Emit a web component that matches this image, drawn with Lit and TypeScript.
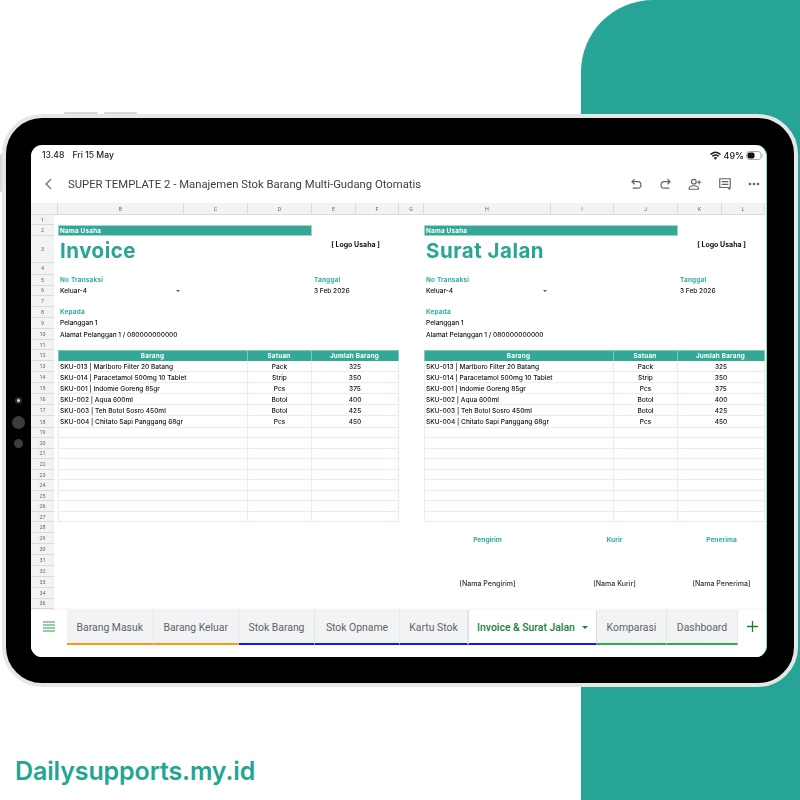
import { LitElement, html, css, svg } from 'lit';
import { customElement } from 'lit/decorators.js';

const COLS = ['', 'B', 'C', 'D', 'E', 'F', 'G', 'H', 'I', 'J', 'K', 'L'];
const ROWS = [...Array.from({ length: 34 }, (_, i) => i + 1), 36];
const ITEMS = [
  ['SKU-013 | Marlboro Filter 20 Batang', 'Pack', '325'],
  ['SKU-014 | Paracetamol 500mg 10 Tablet', 'Strip', '350'],
  ['SKU-001 | Indomie Goreng 85gr', 'Pcs', '375'],
  ['SKU-002 | Aqua 600ml', 'Botol', '400'],
  ['SKU-003 | Teh Botol Sosro 450ml', 'Botol', '425'],
  ['SKU-004 | Chitato Sapi Panggang 68gr', 'Pcs', '450'],
];
const TABS = [
  { name: 'Barang Masuk', width: 86.5, color: '#ff9a0e' },
  { name: 'Barang Keluar', width: 85.5, color: '#ff9a0e' },
  { name: 'Stok Barang', width: 76, color: '#1616ee' },
  { name: 'Stok Opname', width: 85, color: '#1616ee' },
  { name: 'Kartu Stok', width: 68, color: '#1616ee' },
  { name: 'Invoice & Surat Jalan', width: 129, color: '#1616ee', active: true },
  { name: 'Komparasi', width: 70, color: '#34a853' },
  { name: 'Dashboard', width: 71, color: '#34a853' },
];
// grid column of the first cell of each document (row header = 1, spacer = 2)
const DOCS = [
  { title: 'Invoice', start: 3 },
  { title: 'Surat Jalan', start: 9 },
];
const SIGNS = [
  { from: 9, span: 1, who: 'Pengirim' },
  { from: 10, span: 2, who: 'Kurir' },
  { from: 12, span: 2, who: 'Penerima' },
];

const at = (col: number, span: number, row: number) =>
  `grid-column:${col} / span ${span};grid-row:${row}`;

@customElement('app-root')
export class AppRoot extends LitElement {
  static styles = css`
    :host {
      display: block;
      width: 800px;
      height: 800px;
      overflow: hidden;
      font-family: 'Inter', 'Liberation Sans', sans-serif;
    }
    .page {
      position: relative;
      box-sizing: border-box;
      width: 800px;
      height: 800px;
      padding: 114px 0 0 2px;
      background: #fff;
    }
    .accent {
      position: absolute;
      top: 0;
      right: 0;
      width: 219px;
      height: 800px;
      background: #26a596;
      border-top-left-radius: 72px;
    }
    .tablet {
      position: relative;
      box-sizing: border-box;
      width: 796px;
      height: 573px;
      padding: 27px 27px 26px 25px;
      background: #000;
      border: 4px solid #e6e6e6;
      border-radius: 40px;
    }
    .key {
      position: absolute;
      background: #d9d9d9;
      border-radius: 2px;
    }
    .key.a { top: -6px; left: 58px; width: 34px; height: 2px; }
    .key.b { top: -6px; left: 98px; width: 33px; height: 2px; }
    .key.c { top: 36px; left: -6px; width: 2px; height: 38px; }
    .dot {
      position: absolute;
      border-radius: 50%;
      background: #3c3c3c;
    }
    .dot.one { left: 9px; top: 279px; width: 7px; height: 7px; background: #2e2e2e; }
    .dot.one::after {
      content: '';
      position: absolute;
      left: 2px;
      top: 2px;
      width: 3px;
      height: 3px;
      border-radius: 50%;
      background: #ddd;
    }
    .dot.two { left: 6px; top: 298px; width: 13px; height: 13px; }
    .dot.three { left: 8px; top: 321px; width: 9px; height: 9px; }
    .screen {
      position: relative;
      display: flex;
      flex-direction: column;
      height: 100%;
      overflow: hidden;
      background: #fff;
      border-radius: 11px;
      border-right: 1px solid #8ad6c8;
      color: #3c4043;
      filter: blur(0.3px);
    }
    .status {
      display: flex;
      align-items: center;
      justify-content: space-between;
      height: 20px;
      padding: 0 3px 0 11px;
      font-size: 8.6px;
      font-weight: 500;
      color: #222;
    }
    .status-right { display: flex; align-items: center; gap: 2px; font-size: 9px; }
    .status-time { margin-right: 8px; }
    .toolbar {
      display: flex;
      align-items: center;
      height: 38px;
      font-family: 'Roboto', sans-serif;
      font-size: 11.3px;
      color: #3c4043;
    }
    .back { width: 14px; height: 14px; margin: 0 12px 0 11px; flex: none; }
    .title { flex: 1; }
    .tool { width: 14px; height: 14px; flex: none; margin-right: 15.5px; }
    .tool:last-child { margin-right: 5px; }
    .sheet {
      flex: 1;
      display: grid;
      grid-template-columns: 23px 4px 126px 64px 64px 44px 43px 25px 127px 63px 64px 44px 43px;
      grid-template-rows:
        12px 10px 11px 27px
        11.5px 11px 10.5px 10.5px 11px 11.5px 11px 10px
        11px repeat(6, 11.1px) repeat(9, 10.55px) repeat(8, 10.87px);
      align-content: start;
      overflow: hidden;
      font-size: 6.55px;
      font-weight: 500;
      color: #111;
    }
    .col, .num {
      display: flex;
      align-items: center;
      justify-content: center;
      box-sizing: border-box;
      background: #f3f3f3;
      font-family: 'Roboto', sans-serif;
      font-size: 5.4px;
      font-weight: 400;
      color: #666;
    }
    .col { border-right: 1px solid #dcdcdc; border-bottom: 1px solid #dcdcdc; }
    .num { border-bottom: 1px solid #dadada; grid-column: 1; }
    .corner { grid-column: 1 / span 2; grid-row: 1; }
    .cell {
      display: flex;
      align-items: center;
      min-width: 0;
      padding: 0 2px;
      white-space: nowrap;
      box-sizing: border-box;
    }
    .band {
      background: #35a796;
      color: #fff;
      font-weight: 700;
      letter-spacing: 0.25px;
      font-size: 6.3px;
      border: 1px solid #9ed8cc;
      padding-left: 1px;
    }
    .doc-title {
      align-items: flex-start;
      color: #2ba593;
      font-size: 20.5px;
      font-weight: 700;
      letter-spacing: 0.5px;
      line-height: 29px;
    }
    .logo {
      justify-content: center;
      align-items: flex-start;
      padding-top: 4px;
      font-weight: 700;
      color: #111;
      font-size: 7px;
    }
    .label { color: #2fae9b; font-weight: 700; font-size: 6.4px; letter-spacing: 0.2px; }
    .pick { justify-content: space-between; padding-right: 4px; }
    .caret {
      width: 0;
      height: 0;
      border-left: 2px solid transparent;
      border-right: 2px solid transparent;
      border-top: 2px solid #555;
    }
    .center { justify-content: center; }
    .th { border: 1px solid #7cc9ba; border-left-width: 0; border-bottom: 0; }
    .th.first { border-left-width: 1px; }
    .td { padding-top: 1px; border-right: 1px solid #e3f2e3; border-bottom: 1px solid #e3f2e3; }
    .td.first { padding-left: 1px; border-left: 1px solid #e3f2e3; }
    .sign { padding-top: 3px; justify-content: center; color: #2fae9b; font-weight: 700; font-size: 6.6px; }
    .signee { padding-top: 2px; justify-content: center; font-size: 7px; color: #333; }
    .tabs {
      display: flex;
      height: 47px;
      flex: none;
      font-family: 'Roboto', sans-serif;
      font-size: 10.4px;
      color: #5f6368;
      background: #fff;
      box-shadow: 0 -1px 2px rgba(0, 0, 0, 0.06);
    }
    .menu {
      display: flex;
      justify-content: center;
      width: 36px;
      flex: none;
      padding-top: 11px;
      box-sizing: border-box;
    }
    .tab {
      display: flex;
      align-items: center;
      justify-content: center;
      gap: 7px;
      box-sizing: border-box;
      flex: none;
      height: 35px;
      padding-top: 1px;
      background: #f1f3f4;
      border-right: 1px solid #e6e8ea;
      border-bottom: 2px solid;
    }
    .tab.active {
      background: #fff;
      color: #188038;
      font-weight: 500;
      border-left: 1px solid #dadce0;
      border-right: 1px solid #dadce0;
    }
    .tab-caret {
      width: 0;
      height: 0;
      border-left: 3px solid transparent;
      border-right: 3px solid transparent;
      border-top: 3px solid #188038;
    }
    .add { display: flex; justify-content: center; flex: 1; padding-top: 11px; }
    .brand {
      margin: 67px 0 0 13px;
      color: #22a592;
      font-size: 25px;
      font-weight: 600;
      letter-spacing: -0.12px;
      line-height: 34px;
      position: relative;
    }
  `;

  private icon(body: unknown, cls: string) {
    return html`<svg class=${cls} viewBox="0 0 24 24" fill="none" stroke="#5f6368" stroke-width="2" stroke-linecap="round" stroke-linejoin="round">${body}</svg>`;
  }

  private renderStatus() {
    return html`<div class="status">
      <div><span class="status-time">13.48</span>Fri 15 May</div>
      <div class="status-right">
        <svg width="11" height="9" viewBox="0 0 24 20" fill="none" stroke="#222" stroke-width="3.2" stroke-linecap="round">
          <path d="M2 7c6-5 14-5 20 0M6 11c4-3 8-3 12 0" />
          <path d="M9 15c2-1.400 4-1.400 6 0l-3 3.500z" fill="#222" stroke-width="1.500" />
        </svg>
        <span>49%</span>
        <svg width="17" height="9" viewBox="0 0 17 9">
          <rect x="0.5" y="0.500" width="14.500" height="8" rx="3" fill="#fff" stroke="#aaa" />
          <rect x="1.500" y="1.500" width="7" height="6" rx="2" fill="#111" />
          <path d="M16 3v3" stroke="#aaa" />
        </svg>
      </div>
    </div>`;
  }

  private renderToolbar() {
    return html`<div class="toolbar">
      ${this.icon(svg`<path d="M15 4l-8 8 8 8" />`, 'back')}
      <div class="title">SUPER TEMPLATE 2 - Manajemen Stok Barang Multi-Gudang Otomatis</div>
      ${this.icon(svg`<path d="M9 4L5 8l4 4M5 8h10a5.500 5.500 0 0 1 0 11H7" />`, 'tool')}
      ${this.icon(svg`<path d="M15 4l4 4-4 4M19 8H9a5.500 5.500 0 0 0 0 11h8" />`, 'tool')}
      ${this.icon(svg`<circle cx="10" cy="8" r="4" /><path d="M2 21v-1c0-3 3-5 8-5s8 2 8 5v1zM19 6v6M16 9h6" />`, 'tool')}
      ${this.icon(svg`<path d="M3 3h18v15h-1v3l-3-3H3zM7 8h10M7 12.500h10" />`, 'tool')}
      ${this.icon(svg`<circle cx="5" cy="12" r="1.300" fill="#5f6368" /><circle cx="12" cy="12" r="1.300" fill="#5f6368" /><circle cx="19" cy="12" r="1.300" fill="#5f6368" />`, 'tool')}
    </div>`;
  }

  // one document block; rows are offset by one for the column header line
  private renderDoc(doc: { title: string; start: number }) {
    const s = doc.start;
    return html`
      <div class="cell band" style=${at(s, 3, 3)}>Nama Usaha</div>
      <div class="cell doc-title" style=${at(s, 3, 4)}>${doc.title}</div>
      <div class="cell logo" style=${at(s + 3, 2, 4)}>[ Logo Usaha ]</div>
      <div class="cell label" style=${at(s, 3, 6)}>No Transaksi</div>
      <div class="cell label" style=${at(s + 3, 2, 6)}>Tanggal</div>
      <div class="cell pick" style=${at(s, 1, 7)}>Keluar-4<span class="caret"></span></div>
      <div class="cell" style=${at(s + 3, 2, 7)}>3 Feb 2026</div>
      <div class="cell label" style=${at(s, 3, 9)}>Kepada</div>
      <div class="cell" style=${at(s, 3, 10)}>Pelanggan 1</div>
      <div class="cell" style=${at(s, 3, 11)}>Alamat Pelanggan 1 / 080000000000</div>
      <div class="cell band center th first" style=${at(s, 2, 13)}>Barang</div>
      <div class="cell band center th" style=${at(s + 2, 1, 13)}>Satuan</div>
      <div class="cell band center th" style=${at(s + 3, 2, 13)}>Jumlah Barang</div>
      ${Array.from({ length: 15 }, (_, i) => {
        const item = ITEMS[i] ?? ['', '', ''];
        const row = 14 + i;
        return html`
          <div class="cell td first" style=${at(s, 2, row)}>${item[0]}</div>
          <div class="cell td center" style=${at(s + 2, 1, row)}>${item[1]}</div>
          <div class="cell td center" style=${at(s + 3, 2, row)}>${item[2]}</div>
        `;
      })}
    `;
  }

  private renderSheet() {
    return html`<div class="sheet">
      <div class="col corner"></div>
      ${COLS.slice(1).map((c, i) => html`<div class="col" style=${at(i + 3, 1, 1)}>${c}</div>`)}
      ${ROWS.map((n, i) => html`<div class="num" style="grid-row:${i + 2}">${n}</div>`)}
      ${DOCS.map((d) => this.renderDoc(d))}
      ${SIGNS.map(
        (s) => html`
          <div class="cell sign" style=${at(s.from, s.span, 30)}>${s.who}</div>
          <div class="cell signee" style=${at(s.from, s.span, 34)}>[Nama ${s.who}]</div>
        `
      )}
    </div>`;
  }

  private renderTabs() {
    return html`<div class="tabs">
      <div class="menu">
        <svg width="12" height="11" viewBox="0 0 12 11" stroke="#2f9e4f" stroke-width="1.200">
          <path d="M0 1h12M0 4h12M0 7h12M0 10h12" />
        </svg>
      </div>
      ${TABS.map(
        (t) => html`<div class="tab ${t.active ? 'active' : ''}" style="width:${t.width}px;border-bottom-color:${t.color}">
          ${t.name}${t.active ? html`<span class="tab-caret"></span>` : ''}
        </div>`
      )}
      <div class="add">
        <svg width="11" height="11" viewBox="0 0 11 11" stroke="#188038" stroke-width="1.300"><path d="M5.500 0v11M0 5.500h11" /></svg>
      </div>
    </div>`;
  }

  render() {
    return html`<div class="page">
      <div class="accent"></div>
      <div class="tablet">
        <span class="key a"></span><span class="key b"></span><span class="key c"></span>
        <span class="dot one"></span><span class="dot two"></span><span class="dot three"></span>
        <div class="screen">
          ${this.renderStatus()} ${this.renderToolbar()} ${this.renderSheet()} ${this.renderTabs()}
        </div>
      </div>
      <div class="brand">Dailysupports.my.id</div>
    </div>`;
  }
}
